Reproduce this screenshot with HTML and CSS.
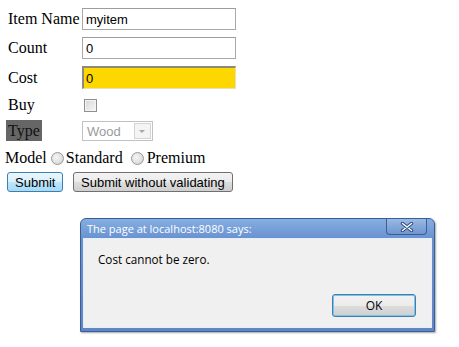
FILE: index.html
```html
<!DOCTYPE html>
<html lang="en">

<head>
    <meta charset="UTF-8">
    <meta name="viewport" content="width=device-width, initial-scale=1.0">
    <title>Item form</title>
    <link rel="stylesheet" href="styles.css">
</head>

<body>
    <form class="item-form">
        <div class="fields">
            <label class="field-label">Item Name</label>
            <input class="text-input" type="text" value="myitem">
            <label class="field-label">Count</label>
            <input class="text-input" type="text" value="0">
            <label class="field-label">Cost</label>
            <input class="text-input invalid" type="text" value="0">
            <label class="field-label">Buy</label>
            <span class="checkbox"></span>
            <label class="field-label"><span class="highlight">Type</span></label>
            <span class="select">
                <span class="select-value">Wood</span>
                <span class="select-arrow"></span>
            </span>
        </div>
        <div class="model-row">
            <span>Model</span>
            <span class="radio"></span>
            <span>Standard</span>
            <span class="radio radio-second"></span>
            <span>Premium</span>
        </div>
        <div class="button-row">
            <button type="button" class="btn btn-focus">Submit</button>
            <button type="button" class="btn">Submit without validating</button>
        </div>
    </form>

    <div class="alert">
        <div class="alert-title">
            <span>The page at localhost:8080 says:</span>
            <span class="alert-close">
                <svg width="14" height="10" viewBox="0 0 14 10">
                    <path d="M2.5 1.5 L11.5 8.5 M11.5 1.5 L2.5 8.5" stroke="#2b4a78" stroke-width="3.4" stroke-linecap="round" />
                    <path d="M2.5 1.5 L11.5 8.5 M11.5 1.5 L2.5 8.5" stroke="#ffffff" stroke-width="1.5" stroke-linecap="round" />
                </svg>
            </span>
        </div>
        <div class="alert-body">
            <p class="alert-text">Cost cannot be zero.</p>
            <div class="alert-actions">
                <button type="button" class="alert-ok">OK</button>
            </div>
        </div>
    </div>
</body>

</html>
```

FILE: styles.css
```css
body {
    margin: 0;
    font-family: "Liberation Serif", "Times New Roman", serif;
    font-size: 16px;
    color: #000;
    background: #fff;
}

.item-form {
    padding: 8px 0 0 5px;
}

.fields {
    display: grid;
    grid-template-columns: 77px 154px;
    grid-template-rows: 22px 22px 23px 18px 20px;
    row-gap: 7px;
    align-items: center;
}

.field-label {
    padding-left: 3px;
}

.highlight {
    background-color: #666666;
    color: #111;
    margin-left: -2px;
    padding: 2px 2px 2px 2px;
}

.text-input {
    box-sizing: border-box;
    width: 154px;
    height: 22px;
    border: 1px solid #a9a9a9;
    border-top-color: #9c9c9c;
    padding: 0 3px;
    font-family: "Liberation Sans", Arial, sans-serif;
    font-size: 13px;
    color: #000;
    outline: none;
}

.text-input.invalid {
    height: 23px;
    background-color: #ffd700;
    border-width: 2px 1px 1px 2px;
    border-color: #8c8a78 #e9e2b0 #e9e2b0 #8c8a78;
    padding-left: 2px;
}

.checkbox {
    box-sizing: border-box;
    width: 13px;
    height: 13px;
    margin-left: 2px;
    border: 1px solid #8e8f8f;
    background: linear-gradient(135deg, #d6d6d6, #f7f7f7);
    box-shadow: inset 0 0 0 1px #f4f4f4;
}

.select {
    box-sizing: border-box;
    display: flex;
    align-items: center;
    width: 71px;
    height: 20px;
    border: 1px solid #c2c2c2;
    font-family: "Liberation Sans", Arial, sans-serif;
    font-size: 13px;
    color: #9b9b9b;
}

.select-value {
    flex: 1;
    padding-left: 4px;
}

.select-arrow {
    box-sizing: border-box;
    position: relative;
    width: 17px;
    height: 16px;
    margin-right: 1px;
    border: 1px solid #d4d4d4;
    background: #f4f4f4;
}

.select-arrow::after {
    content: "";
    position: absolute;
    left: 4px;
    top: 6px;
    border-left: 3px solid transparent;
    border-right: 3px solid transparent;
    border-top: 3px solid #a8a8a8;
}

.model-row {
    display: flex;
    align-items: center;
    margin-top: 7px;
    height: 20px;
}

.radio {
    box-sizing: border-box;
    width: 13px;
    height: 13px;
    margin: 1px 2px 0 4px;
    border-radius: 50%;
    border: 1px solid #979797;
    background: radial-gradient(circle at 40% 40%, #f6f6f6, #cfcfcf);
}

.radio-second {
    margin-left: 8px;
    margin-right: 3px;
}

.button-row {
    display: flex;
    gap: 10px;
    margin-top: 4px;
    padding-left: 2px;
}

.btn {
    height: 20px;
    padding: 0 7px;
    border: 1px solid #707070;
    border-radius: 3px;
    background: linear-gradient(#f3f3f3 0%, #ebebeb 50%, #dddddd 51%, #cfcfcf 100%);
    font-family: "Liberation Sans", Arial, sans-serif;
    font-size: 13px;
    color: #000;
}

.btn-focus {
    width: 56px;
    border-color: #3c7fb1;
    background: linear-gradient(#eaf6fd 0%, #d9f0fc 50%, #bee6fd 51%, #a7d9f5 100%);
}

/* alert dialog sits on top of the page */
.alert {
    position: absolute;
    left: 80px;
    top: 218px;
    width: 355px;
    height: 114px;
    box-sizing: border-box;
    display: flex;
    flex-direction: column;
    border: 1px solid #3a5f95;
    border-radius: 6px 6px 0 0;
    background: linear-gradient(#86aee2, #6891d0 20px, #5f87c8);
    box-shadow: 1px 1px 2px rgba(0, 0, 0, 0.35);
    font-family: "Open Sans", "Noto Sans", sans-serif;
    font-size: 12px;
}

.alert-title {
    display: flex;
    justify-content: space-between;
    height: 19px;
    padding-left: 6px;
    color: #fff;
    font-size: 11px;
    line-height: 19px;
}

.alert-close {
    display: flex;
    align-items: center;
    justify-content: center;
    width: 39px;
    height: 15px;
    margin-right: 7px;
    border: 1px solid #3a5f95;
    border-top: none;
    border-radius: 0 0 4px 4px;
    background: linear-gradient(#9ab9e4, #6f96cf);
}

.alert-body {
    flex: 1;
    margin: 0 2px 3px 2px;
    border: 1px solid #e6eef8;
    background: #f0f0f0;
    display: flex;
    flex-direction: column;
    font-size: 11.7px;
}

.alert-text {
    margin: 12px 0 0 14px;
    color: #000;
}

.alert-actions {
    display: flex;
    justify-content: flex-end;
    margin-top: auto;
    padding: 0 15px 10px 0;
}

.alert-ok {
    width: 84px;
    height: 23px;
    border: 1px solid #3c7fb1;
    border-radius: 3px;
    background: linear-gradient(#f2f2f2 0%, #ebebeb 50%, #dddddd 51%, #cfcfcf 100%);
    box-shadow: inset 0 0 0 1px #7dc4e4;
    font-family: "Open Sans", "Noto Sans", sans-serif;
    font-size: 12px;
    color: #000;
}
```
